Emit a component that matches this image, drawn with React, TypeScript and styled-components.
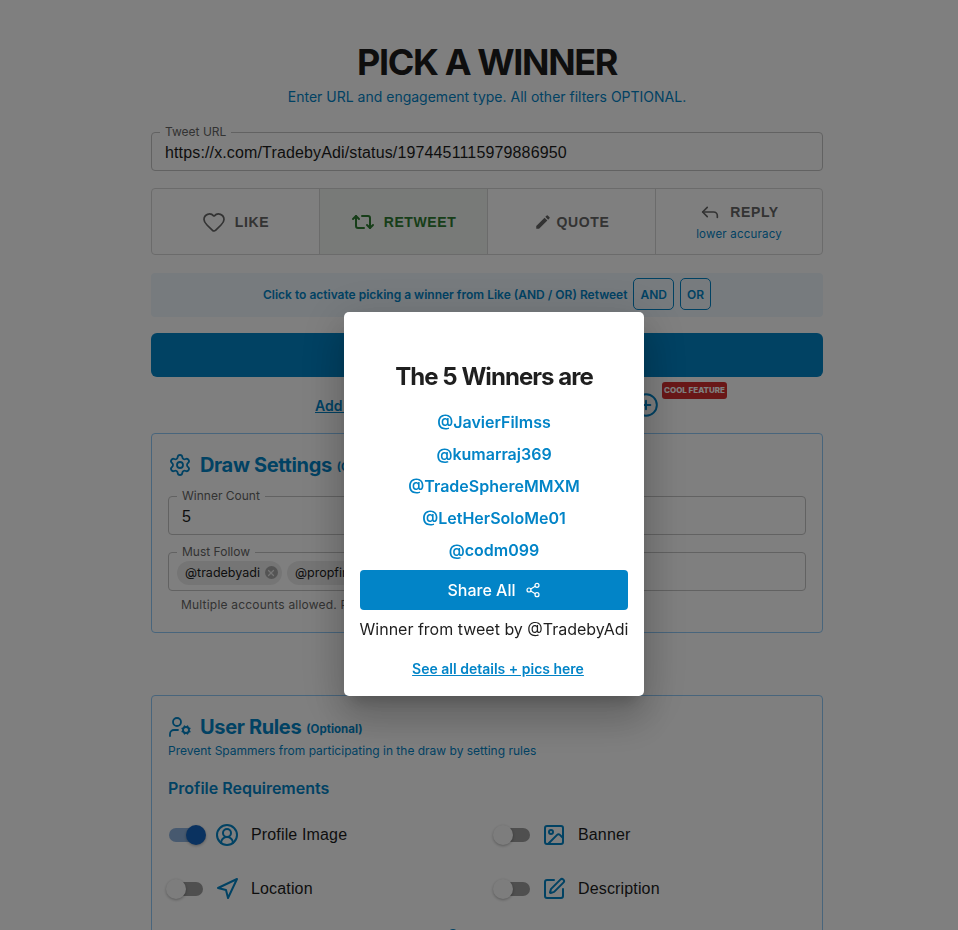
import React from 'react';
import styled, {createGlobalStyle} from 'styled-components';
import {
  BadgeCheck,
  CirclePlus,
  CircleUserRound,
  Heart,
  Image,
  Navigation,
  Repeat2,
  Reply,
  Settings,
  Share2,
  SquarePen,
  UserCog,
  X
} from 'lucide-react';
import {MdEdit} from 'react-icons/md';

const PRIMARY = '#0284c7';
const INK = '#1c1c1c';

const GlobalStyle = createGlobalStyle`
  html, body {
    margin: 0;
    height: 930px;
    overflow: hidden;
    background: #fff;
    font-family: Inter, "Liberation Sans", sans-serif;
    color: ${INK};
  }
`;

const Page = styled.main`
  width: 672px;
  margin-left: 151px;
  padding-top: 40px;
`;

const Title = styled.h1`
  margin: 0;
  font-size: 36px;
  line-height: 44px;
  font-weight: 700;
  letter-spacing: -1.35px;
  text-align: center;
  color: #1c1c1c;
`;

const Subtitle = styled.p`
  margin: 2px 0 18px;
  font-size: 14px;
  line-height: 22px;
  text-align: center;
  color: ${PRIMARY};
`;

const Field = styled.fieldset`
  margin: 0;
  padding: 0 13px;
  border: 1px solid #c4c4c4;
  border-radius: 4px;
  min-width: 0;
  height: 45px;
  box-sizing: border-box;
  display: flex;
  align-items: center;
`;

const FieldLabel = styled.legend`
  margin-left: -5px;
  padding: 0 5px;
  font-size: 12px;
  line-height: 12px;
  color: #666;
`;

const FieldValue = styled.div`
  font-family: "Liberation Sans", Arial, sans-serif;
  font-size: 16px;
  line-height: 22px;
  letter-spacing: 0.14px;
  color: #1c1c1c;
  margin-top: -3px;
`;

const Engagements = styled.div`
  display: grid;
  grid-template-columns: 167px 168px 168px 167px;
  margin-top: 17px;
  height: 67px;
  border: 1px solid #d6d6d6;
  border-radius: 4px;
  box-sizing: border-box;
`;

const Engagement = styled.button<{$active?: boolean; $first?: boolean}>`
  display: flex;
  flex-direction: column;
  align-items: center;
  justify-content: center;
  padding: 0;
  border: 0;
  border-left: ${p => (p.$first ? '0' : '1px solid #d6d6d6')};
  background: ${p => (p.$active ? '#f0f4f0' : 'transparent')};
  color: ${p => (p.$active ? '#2e7d32' : '#666')};
  font-family: "Liberation Sans", Arial, sans-serif;
  font-weight: 700;
  font-size: 14px;
  letter-spacing: 0.6px;
`;

const EngagementLine = styled.span<{$gap?: number}>`
  display: flex;
  align-items: center;
  gap: ${p => p.$gap ?? 9}px;
`;

const Hint = styled.span`
  margin-top: 3px;
  font-family: Inter, sans-serif;
  font-size: 11.5px;
  font-weight: 400;
  line-height: 16px;
  letter-spacing: 0.2px;
  color: ${PRIMARY};
`;

const Combine = styled.div`
  display: flex;
  align-items: center;
  justify-content: center;
  gap: 6px;
  margin-top: 18px;
  height: 44px;
  padding-bottom: 2px;
  box-sizing: border-box;
  border-radius: 4px;
  background: #eef6fc;
  font-size: 12px;
  font-weight: 600;
  color: ${PRIMARY};
`;

const CombineButton = styled.span`
  display: flex;
  align-items: center;
  height: 32px;
  padding: 0 6px;
  box-sizing: border-box;
  border: 1px solid ${PRIMARY};
  border-radius: 5px;
`;

const PickButton = styled.div`
  margin-top: 16px;
  height: 44px;
  border-radius: 6px;
  background: ${PRIMARY};
  color: #fff;
  font-weight: 600;
  display: flex;
  align-items: center;
  justify-content: center;
`;

const AddRow = styled.div`
  display: flex;
  align-items: center;
  justify-content: center;
  margin-top: 15px;
  height: 26px;
  color: ${PRIMARY};
`;

const AddLink = styled.a`
  width: 318px;
  font-size: 14px;
  font-weight: 600;
  text-decoration: underline;
  white-space: nowrap;
  overflow: hidden;
`;

const AddIcon = styled.span`
  position: relative;
  display: flex;
`;

const Badge = styled.span`
  position: absolute;
  left: 29px;
  top: -10px;
  width: 65px;
  height: 17px;
  border-radius: 3px;
  background: #d32f2f;
  color: #fff;
  font-size: 8px;
  font-weight: 800;
  line-height: 17px;
  text-align: center;
  white-space: nowrap;
`;

const Card = styled.section<{$top: number; $height?: number}>`
  margin-top: ${p => p.$top}px;
  padding: 16px;
  height: ${p => (p.$height ? `${p.$height}px` : 'auto')};
  box-sizing: border-box;
  border: 1px solid #90caf9;
  border-radius: 4px;
`;

const CardHeading = styled.h2`
  display: flex;
  align-items: center;
  gap: 8px;
  margin: 0;
  height: 30px;
  font-size: 20px;
  font-weight: 700;
  letter-spacing: -0.35px;
  color: ${PRIMARY};
`;

const Optional = styled.small`
  font-size: 11.5px;
  font-weight: 700;
  letter-spacing: 0;
  margin-left: -3px;
  margin-top: 3px;
`;

const CardHint = styled.p`
  margin: 1px 0 0;
  font-size: 12px;
  line-height: 16px;
  color: ${PRIMARY};
`;

const SectionTitle = styled.h3`
  margin: 17px 0 0;
  font-size: 16px;
  line-height: 24px;
  font-weight: 600;
  color: ${PRIMARY};
`;

const FieldStack = styled.div`
  margin-top: 10px;

  ${Field} + ${Field} {
    margin-top: 11px;
  }
`;

const Chips = styled.div`
  display: flex;
  gap: 5px;
  margin-left: -5px;
  margin-top: -3px;
`;

const Chip = styled.span`
  display: flex;
  align-items: center;
  gap: 5px;
  height: 24px;
  padding: 0 4px 0 8px;
  border-radius: 12px;
  background: #ebebeb;
  font-size: 12.5px;
  color: #1c1c1c;
`;

const ChipClose = styled.span`
  display: flex;
  align-items: center;
  justify-content: center;
  width: 13px;
  height: 13px;
  border-radius: 50%;
  background: #a8a8a8;
  color: #ebebeb;
`;

const Helper = styled.p`
  margin: 6px 0 0 13px;
  font-size: 12px;
  line-height: 16px;
  letter-spacing: 0.2px;
  color: #666;
`;

const ToggleGrid = styled.div`
  display: grid;
  grid-template-columns: 327px 1fr;
  row-gap: 30px;
  margin-top: 23px;
`;

const ToggleRow = styled.div`
  display: flex;
  align-items: center;
  height: 24px;
  color: ${PRIMARY};
`;

const Track = styled.span<{$on?: boolean}>`
  position: relative;
  flex: none;
  width: 34px;
  height: 14px;
  margin: 0 12px 0 1px;
  border-radius: 7px;
  background: ${p => (p.$on ? '#8fb3de' : '#9e9e9e')};
`;

const Thumb = styled.span<{$on?: boolean}>`
  position: absolute;
  top: -3px;
  left: ${p => (p.$on ? '17px' : '-3px')};
  width: 20px;
  height: 20px;
  border-radius: 50%;
  background: ${p => (p.$on ? '#1565c0' : '#fafafa')};
  box-shadow: 0 1px 3px rgba(0, 0, 0, 0.3);
`;

const ToggleLabel = styled.span`
  margin-left: 12px;
  font-family: "Liberation Sans", Arial, sans-serif;
  font-size: 16px;
  letter-spacing: 0.15px;
  color: #1c1c1c;
`;

const MoreRow = styled.div`
  display: flex;
  align-items: center;
  justify-content: center;
  gap: 8px;
  margin-top: 27px;
  color: ${PRIMARY};
  font-weight: 600;
  font-size: 16px;
`;

const Overlay = styled.div`
  position: fixed;
  inset: 0;
  display: flex;
  justify-content: center;
  align-items: flex-start;
  padding: 312px 0 0 30px;
  box-sizing: border-box;
  background: rgba(0, 0, 0, 0.5);
`;

const Modal = styled.div`
  width: 300px;
  height: 384px;
  padding: 49px 16px 0;
  box-sizing: border-box;
  background: #fff;
  border-radius: 5px;
  text-align: center;
  box-shadow: 0 11px 15px -7px rgba(0, 0, 0, 0.2), 0 24px 38px 3px rgba(0, 0, 0, 0.14),
    0 9px 46px 8px rgba(0, 0, 0, 0.12);
`;

const ModalTitle = styled.h2`
  margin: 0 0 13px;
  font-size: 24px;
  line-height: 32px;
  font-weight: 700;
  letter-spacing: -0.95px;
  color: #1f1f1f;
`;

const WinnerName = styled.div`
  font-size: 16px;
  line-height: 32px;
  font-weight: 600;
  color: ${PRIMARY};
`;

const ShareButton = styled.button`
  display: flex;
  align-items: center;
  justify-content: center;
  gap: 9px;
  width: 100%;
  height: 40px;
  margin-top: 4px;
  padding: 0;
  border: 0;
  border-radius: 4px;
  background: ${PRIMARY};
  color: #fff;
  font-family: Inter, sans-serif;
  font-size: 16px;
  font-weight: 500;
`;

const TweetBy = styled.p`
  margin: 8px -4px 0;
  font-size: 16px;
  line-height: 22px;
  color: #1f1f1f;
  white-space: nowrap;
`;

const DetailsLink = styled.a`
  display: block;
  margin: 18px 0 0 8px;
  font-size: 14px;
  line-height: 22px;
  font-weight: 600;
  text-decoration: underline;
  color: ${PRIMARY};
`;

const WINNERS = ['@JavierFilmss', '@kumarraj369', '@TradeSphereMMXM', '@LetHerSoloMe01', '@codm099'];

const TOGGLES = [
  {label: 'Profile Image', Icon: CircleUserRound, on: true},
  {label: 'Banner', Icon: Image},
  {label: 'Location', Icon: Navigation},
  {label: 'Description', Icon: SquarePen}
];

const App = () => (
  <>
    <GlobalStyle />
    <Page>
      <Title>PICK A WINNER</Title>
      <Subtitle>Enter URL and engagement type. All other filters OPTIONAL.</Subtitle>

      <Field>
        <FieldLabel>Tweet URL</FieldLabel>
        <FieldValue>https://x.com/TradebyAdi/status/1974451115979886950</FieldValue>
      </Field>

      <Engagements>
        <Engagement $first>
          <EngagementLine>
            <Heart size={24} strokeWidth={1.7} />
            LIKE
          </EngagementLine>
        </Engagement>
        <Engagement $active>
          <EngagementLine>
            <Repeat2 size={24} strokeWidth={2} />
            RETWEET
          </EngagementLine>
        </Engagement>
        <Engagement>
          <EngagementLine $gap={5}>
            <MdEdit size={18} />
            QUOTE
          </EngagementLine>
        </Engagement>
        <Engagement>
          <EngagementLine>
            <Reply size={22} strokeWidth={1.8} />
            REPLY
          </EngagementLine>
          <Hint>lower accuracy</Hint>
        </Engagement>
      </Engagements>

      <Combine>
        Click to activate picking a winner from Like (AND / OR) Retweet
        <CombineButton>AND</CombineButton>
        <CombineButton>OR</CombineButton>
      </Combine>

      <PickButton>Pick Winner</PickButton>

      <AddRow>
        <AddLink>Add Bonus Rules and Advanced Filters</AddLink>
        <AddIcon>
          <CirclePlus size={26} strokeWidth={1.8} />
          <Badge>COOL FEATURE</Badge>
        </AddIcon>
      </AddRow>

      <Card $top={15} $height={200}>
        <CardHeading>
          <Settings size={24} strokeWidth={1.8} />
          Draw Settings
          <Optional>(Optional)</Optional>
        </CardHeading>
        <FieldStack>
          <Field>
            <FieldLabel>Winner Count</FieldLabel>
            <FieldValue>5</FieldValue>
          </Field>
          <Field>
            <FieldLabel>Must Follow</FieldLabel>
            <Chips>
              <Chip>
                @tradebyadi
                <ChipClose>
                  <X size={10} strokeWidth={3} />
                </ChipClose>
              </Chip>
              <Chip>
                @propfirm
                <ChipClose>
                  <X size={10} strokeWidth={3} />
                </ChipClose>
              </Chip>
            </Chips>
          </Field>
        </FieldStack>
        <Helper>Multiple accounts allowed. Press enter after each one.</Helper>
      </Card>

      <Card $top={62}>
        <CardHeading>
          <UserCog size={24} strokeWidth={1.8} />
          User Rules
          <Optional>(Optional)</Optional>
        </CardHeading>
        <CardHint>Prevent Spammers from participating in the draw by setting rules</CardHint>
        <SectionTitle>Profile Requirements</SectionTitle>
        <ToggleGrid>
          {TOGGLES.map(({label, Icon, on}) => (
            <ToggleRow key={label}>
              <Track $on={on}>
                <Thumb $on={on} />
              </Track>
              <Icon size={24} strokeWidth={2} />
              <ToggleLabel>{label}</ToggleLabel>
            </ToggleRow>
          ))}
        </ToggleGrid>
        <MoreRow>
          <BadgeCheck size={24} />
          Verified
        </MoreRow>
      </Card>
    </Page>

    <Overlay>
      <Modal>
        <ModalTitle>The 5 Winners are</ModalTitle>
        {WINNERS.map(name => (
          <WinnerName key={name}>{name}</WinnerName>
        ))}
        <ShareButton>
          Share All
          <Share2 size={16} strokeWidth={1.8} />
        </ShareButton>
        <TweetBy>Winner from tweet by @TradebyAdi</TweetBy>
        <DetailsLink>See all details + pics here</DetailsLink>
      </Modal>
    </Overlay>
  </>
);

export default App;
